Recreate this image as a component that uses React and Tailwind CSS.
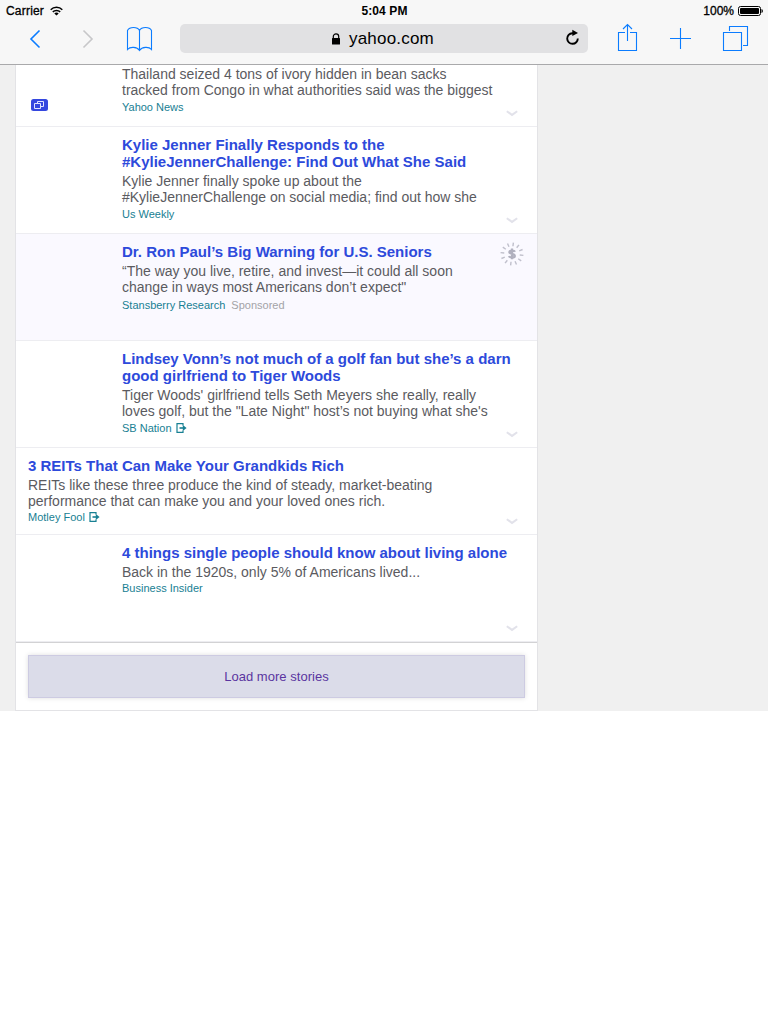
import React from "react";

const stories = [
  {
    height: "h-[107px]",
    title: ["Kylie Jenner Finally Responds to the", "#KylieJennerChallenge: Find Out What She Said"],
    body: ["Kylie Jenner finally spoke up about the", "#KylieJennerChallenge on social media; find out how she"],
    source: "Us Weekly",
    sourceGap: "mt-[2px]",
  },
  {
    height: "h-[107px]",
    title: ["Dr. Ron Paul’s Big Warning for U.S. Seniors"],
    body: ["“The way you live, retire, and invest—it could all soon", "change in ways most Americans don’t expect\""],
    source: "Stansberry Research",
    sourceGap: "mt-[3px]",
    sponsored: true,
  },
  {
    height: "h-[107px]",
    title: ["Lindsey Vonn’s not much of a golf fan but she’s a darn", "good girlfriend to Tiger Woods"],
    body: ["Tiger Woods' girlfriend tells Seth Meyers she really, really", "loves golf, but the \"Late Night\" host’s not buying what she's"],
    source: "SB Nation",
    sourceGap: "mt-[2px]",
    external: true,
  },
  {
    height: "h-[87px]",
    title: ["3 REITs That Can Make Your Grandkids Rich"],
    body: ["REITs like these three produce the kind of steady, market-beating", "performance that can make you and your loved ones rich."],
    source: "Motley Fool",
    sourceGap: "mt-[1px]",
    external: true,
    wide: true,
  },
  {
    height: "h-[107px]",
    title: ["4 things single people should know about living alone"],
    body: ["Back in the 1920s, only 5% of Americans lived..."],
    source: "Business Insider",
    sourceGap: "mt-[1px]",
  },
];

function Chevron() {
  return (
    <svg className="absolute right-[19px] bottom-[9px]" width="12" height="7" viewBox="0 0 12 7" fill="none">
      <path d="M.8 1.2 6 4.9 11.2 1.2" stroke="#e2e2ea" strokeWidth="2" />
    </svg>
  );
}

function External() {
  return (
    <svg className="ml-[4px] mt-[2px]" width="11" height="10" viewBox="0 0 11 10" fill="none">
      <path d="M7 2.5V.7H1v8.6h6V7.5" stroke="#188093" strokeWidth="1.2" />
      <path d="M3.5 5H8" stroke="#188093" strokeWidth="1.6" />
      <path d="M6.8 2 10.6 5 6.8 8Z" fill="#188093" />
    </svg>
  );
}

function Dollar() {
  const rays = [7, 37, 67, 97, 127, 157, 187, 217, 247, 277, 307, 337];
  return (
    <svg className="absolute right-[13px] top-[8px]" width="24" height="24" viewBox="-12 -12 24 24">
      {rays.map((a) => (
        <path key={a} d="M0-11.5V-7.8" stroke="#c0c0cc" strokeWidth="1.4" transform={`rotate(${a})`} />
      ))}
      <path d="M3-2.3C2.2-3.8-2.5-4-2.6-1.9 -2.7.1 2.8-.4 2.8 1.9 2.8 4.1-2.3 3.9-3.1 2.1M0-5.5V5.3" fill="none" stroke="#b0b0be" strokeWidth="2.3" />
    </svg>
  );
}

function Story({ s }) {
  return (
    <article
      className={`relative shrink-0 border-b border-[#ededf1] pt-[9px] whitespace-nowrap ${s.height} ${s.wide ? "pl-3" : "pl-[106px]"} ${s.sponsored ? "bg-[#faf9ff]" : "bg-white"}`}
    >
      <h2 className="text-[15px] leading-[17px] font-bold text-[#2d4adb]">
        {s.title.map((l) => (
          <div key={l}>{l}</div>
        ))}
      </h2>
      <div className="mt-[3px] text-[14px] leading-[16px] text-[#5b5b5f]">
        {s.body.map((l) => (
          <div key={l}>{l}</div>
        ))}
      </div>
      <div className={`flex text-[11px] leading-[14px] text-[#188093] ${s.sourceGap}`}>
        <span>{s.source}</span>
        {s.external && <External />}
        {s.sponsored && <span className="ml-[6px] text-[#a3a3a7]">Sponsored</span>}
      </div>
      {s.sponsored ? <Dollar /> : <Chevron />}
    </article>
  );
}

function StatusBar() {
  return (
    <div className="grid h-[22px] grid-cols-3 items-center pl-[6px] pr-[5px] text-[12px] leading-[22px] text-black">
      <div className="flex items-center gap-[6px]">
        <span className="tracking-[0.2px] [-webkit-text-stroke:0.3px_black]">Carrier</span>
        <svg width="13" height="10" viewBox="0 0 13 10" fill="none" stroke="black">
          <path d="M.7 3.7C3.8.5 9.2.5 12.3 3.7" strokeWidth="1.5" />
          <path d="M2.8 5.9C4.8 3.9 8.2 3.9 10.2 5.9" strokeWidth="1.5" />
          <path d="M4.3 7.4C5.5 6.2 7.5 6.2 8.7 7.4L6.5 9.6Z" fill="black" stroke="none" />
        </svg>
      </div>
      <div className="text-center font-bold tracking-[0.1px]">5:04 PM</div>
      <div className="flex items-center justify-end gap-[4px]">
        <span className="[-webkit-text-stroke:0.3px_black]">100%</span>
        <svg width="25" height="10" viewBox="0 0 25 10">
          <rect x=".5" y=".5" width="22" height="9" rx="2" fill="none" stroke="black" />
          <rect x="2" y="2" width="19" height="6" rx="1" />
          <path d="M23.5 3C25.3 3.5 25.3 6.5 23.5 7Z" />
        </svg>
      </div>
    </div>
  );
}

function Toolbar() {
  return (
    <div className="flex h-[42px] items-start">
      <svg width="180" height="42" viewBox="0 22 180 42" fill="none">
        <path d="M39.5 30.5 31 39 39.5 47.5" stroke="#0b7cff" strokeWidth="1.6" />
        <path d="M83.5 30.5 92 39 83.5 47.5" stroke="#c7c7c9" strokeWidth="1.6" />
        <path d="M139.5 50.5V30.5C137.5 26.5 129.5 26.5 127.5 30.5V49.5C130 46.5 137 46.5 139.5 50.5C142 46.5 149 46.5 151.5 49.5V30.5C149.5 26.5 141.5 26.5 139.5 30.5" stroke="#0b7cff" strokeWidth="1.1" />
      </svg>
      <div className="relative mt-[2px] flex h-[29px] w-[408px] items-center rounded-[5px] bg-[#e1e1e3] pl-[151px] text-[17px] leading-[29px] text-black">
        <svg className="mr-[8px]" width="10" height="12" viewBox="0 0 10 12">
          <path d="M2.3 6V3.6C2.3 0 7.7 0 7.7 3.6V6" fill="none" stroke="black" strokeWidth="1.2" />
          <rect x="1" y="5" width="8" height="6.5" rx=".6" />
        </svg>
        <span className="tracking-[0.2px]">yahoo.com</span>
        <svg className="absolute right-[8px] top-[5px]" width="15" height="18" viewBox="0 0 15 18">
          <path d="M9.5 4.2H7.3A5.3 5.3 0 1 0 12.8 9.5" fill="none" stroke="black" strokeWidth="1.9" />
          <path d="M7.3.8 13 4.1 7.3 7Z" />
        </svg>
      </div>
      <svg width="180" height="42" viewBox="588 22 180 42" fill="none" stroke="#0b7cff" strokeWidth="1.1">
        <path d="M625 32.5H618.5V50.5H636.5V32.5H630M627.5 41V24.8M623 29 627.5 24.5 632 29" />
        <path d="M680.5 28V49M670 38.5H691" />
        <path d="M723.5 32.5H741.5V50.5H723.5ZM729.5 31V26.5H747.5V45.5H743" />
      </svg>
    </div>
  );
}

export default function App() {
  return (
    <div className="flex h-[1024px] w-[768px] flex-col overflow-hidden bg-white font-['Liberation_Sans',Arial,sans-serif]">
      <header className="h-[65px] shrink-0 border-b border-[#a9a9ab] bg-[#f7f7f7]">
        <StatusBar />
        <Toolbar />
      </header>
      <main className="h-[646px] shrink-0 bg-[#f0f0f0] pl-[15px]">
        <div className="flex h-[646px] w-[523px] flex-col border-x border-b border-[#e3e3e6] bg-white">
          <article className="relative h-[62px] shrink-0 border-b border-[#ededf1] pl-[106px] pt-[1px] whitespace-nowrap">
            <div className="text-[14px] leading-[16px] text-[#5b5b5f]">
              <div>Thailand seized 4 tons of ivory hidden in bean sacks</div>
              <div>tracked from Congo in what authorities said was the biggest</div>
            </div>
            <div className="mt-[2px] text-[11px] leading-[14px] text-[#188093]">Yahoo News</div>
            <svg className="absolute left-[15px] top-[34px]" width="17" height="12" viewBox="0 0 17 12">
              <rect width="17" height="12" rx="2.5" fill="#3447df" />
              <path d="M3.5 4.5H9.5V9.5H3.5ZM6.5 4V2.5H12.5V7.5H10" fill="none" stroke="#dfe3ff" />
            </svg>
            <Chevron />
          </article>
          {stories.map((s) => (
            <Story key={s.source} s={s} />
          ))}
          <div className="flex grow border-t border-[#d2d2d4] px-3 pt-3">
            <button className="h-[43px] w-full border border-[#cdcbe2] bg-[#dbdce9] text-[13px] tracking-[0.04px] text-[#5a35a0] shadow-[0_0_5px_rgba(0,0,0,0.13)]">
              Load more stories
            </button>
          </div>
        </div>
      </main>
    </div>
  );
}
